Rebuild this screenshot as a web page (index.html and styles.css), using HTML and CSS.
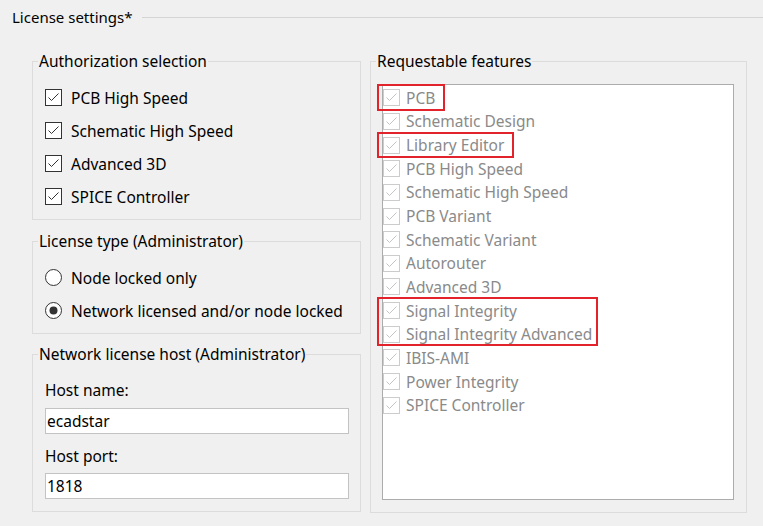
FILE: index.html
```html
<!DOCTYPE html>
<html>
<head>
<meta charset="utf-8">
<link rel="stylesheet" href="styles.css">
</head>
<body>
<div class="page">
  <div class="header">
    <span class="header-title">License settings*</span>
    <span class="header-line"></span>
  </div>
  <div class="content">
    <div class="left-col">
      <fieldset class="group g-auth">
        <legend>Authorization selection</legend>
        <div class="group-body body-auth">
          <div class="opt"><span class="cb"><svg viewBox="0 0 17 17" width="17" height="17"><rect x="0.5" y="0.5" width="16" height="16" fill="#fff" stroke="#333"/><path d="M3.5 8.5 L6.5 11.5 L13.5 4.5" fill="none" stroke="#333" stroke-width="1"/></svg></span><span class="opt-text">PCB High Speed</span></div>
          <div class="opt"><span class="cb"><svg viewBox="0 0 17 17" width="17" height="17"><rect x="0.5" y="0.5" width="16" height="16" fill="#fff" stroke="#333"/><path d="M3.5 8.5 L6.5 11.5 L13.5 4.5" fill="none" stroke="#333" stroke-width="1"/></svg></span><span class="opt-text">Schematic High Speed</span></div>
          <div class="opt"><span class="cb"><svg viewBox="0 0 17 17" width="17" height="17"><rect x="0.5" y="0.5" width="16" height="16" fill="#fff" stroke="#333"/><path d="M3.5 8.5 L6.5 11.5 L13.5 4.5" fill="none" stroke="#333" stroke-width="1"/></svg></span><span class="opt-text">Advanced 3D</span></div>
          <div class="opt"><span class="cb"><svg viewBox="0 0 17 17" width="17" height="17"><rect x="0.5" y="0.5" width="16" height="16" fill="#fff" stroke="#333"/><path d="M3.5 8.5 L6.5 11.5 L13.5 4.5" fill="none" stroke="#333" stroke-width="1"/></svg></span><span class="opt-text">SPICE Controller</span></div>
        </div>
      </fieldset>
      <fieldset class="group g-type">
        <legend>License type (Administrator)</legend>
        <div class="group-body body-type">
          <div class="opt"><span class="rb"><svg viewBox="0 0 17 17" width="17" height="17"><circle cx="8.5" cy="8.5" r="8" fill="#fff" stroke="#333"/></svg></span><span class="opt-text">Node locked only</span></div>
          <div class="opt"><span class="rb"><svg viewBox="0 0 17 17" width="17" height="17"><circle cx="8.5" cy="8.5" r="8" fill="#fff" stroke="#333"/><circle cx="8.5" cy="8.5" r="4" fill="#333"/></svg></span><span class="opt-text">Network licensed and/or node locked</span></div>
        </div>
      </fieldset>
      <fieldset class="group g-host">
        <legend>Network license host (Administrator)</legend>
        <div class="group-body body-host">
          <div class="field-label">Host name:</div>
          <div class="textbox">ecadstar</div>
          <div class="field-label second">Host port:</div>
          <div class="textbox">1818</div>
        </div>
      </fieldset>
    </div>
    <fieldset class="group g-feat">
      <legend>Requestable features</legend>
      <div class="group-body body-feat">
        <div class="listbox">
          <div class="item"><span class="dcb"><svg viewBox="0 0 17 17" width="17" height="17"><rect x="0.5" y="0.5" width="16" height="16" fill="#fff" stroke="#cccccc"/><path d="M3.5 8.5 L6.5 11.5 L13.5 4.5" fill="none" stroke="#c4c4c4" stroke-width="1"/></svg></span><span class="item-text">PCB</span></div>
          <div class="item"><span class="dcb"><svg viewBox="0 0 17 17" width="17" height="17"><rect x="0.5" y="0.5" width="16" height="16" fill="#fff" stroke="#cccccc"/><path d="M3.5 8.5 L6.5 11.5 L13.5 4.5" fill="none" stroke="#c4c4c4" stroke-width="1"/></svg></span><span class="item-text">Schematic Design</span></div>
          <div class="item"><span class="dcb"><svg viewBox="0 0 17 17" width="17" height="17"><rect x="0.5" y="0.5" width="16" height="16" fill="#fff" stroke="#cccccc"/><path d="M3.5 8.5 L6.5 11.5 L13.5 4.5" fill="none" stroke="#c4c4c4" stroke-width="1"/></svg></span><span class="item-text">Library Editor</span></div>
          <div class="item"><span class="dcb"><svg viewBox="0 0 17 17" width="17" height="17"><rect x="0.5" y="0.5" width="16" height="16" fill="#fff" stroke="#cccccc"/><path d="M3.5 8.5 L6.5 11.5 L13.5 4.5" fill="none" stroke="#c4c4c4" stroke-width="1"/></svg></span><span class="item-text">PCB High Speed</span></div>
          <div class="item"><span class="dcb"><svg viewBox="0 0 17 17" width="17" height="17"><rect x="0.5" y="0.5" width="16" height="16" fill="#fff" stroke="#cccccc"/><path d="M3.5 8.5 L6.5 11.5 L13.5 4.5" fill="none" stroke="#c4c4c4" stroke-width="1"/></svg></span><span class="item-text">Schematic High Speed</span></div>
          <div class="item"><span class="dcb"><svg viewBox="0 0 17 17" width="17" height="17"><rect x="0.5" y="0.5" width="16" height="16" fill="#fff" stroke="#cccccc"/><path d="M3.5 8.5 L6.5 11.5 L13.5 4.5" fill="none" stroke="#c4c4c4" stroke-width="1"/></svg></span><span class="item-text">PCB Variant</span></div>
          <div class="item"><span class="dcb"><svg viewBox="0 0 17 17" width="17" height="17"><rect x="0.5" y="0.5" width="16" height="16" fill="#fff" stroke="#cccccc"/><path d="M3.5 8.5 L6.5 11.5 L13.5 4.5" fill="none" stroke="#c4c4c4" stroke-width="1"/></svg></span><span class="item-text">Schematic Variant</span></div>
          <div class="item"><span class="dcb"><svg viewBox="0 0 17 17" width="17" height="17"><rect x="0.5" y="0.5" width="16" height="16" fill="#fff" stroke="#cccccc"/><path d="M3.5 8.5 L6.5 11.5 L13.5 4.5" fill="none" stroke="#c4c4c4" stroke-width="1"/></svg></span><span class="item-text">Autorouter</span></div>
          <div class="item"><span class="dcb"><svg viewBox="0 0 17 17" width="17" height="17"><rect x="0.5" y="0.5" width="16" height="16" fill="#fff" stroke="#cccccc"/><path d="M3.5 8.5 L6.5 11.5 L13.5 4.5" fill="none" stroke="#c4c4c4" stroke-width="1"/></svg></span><span class="item-text">Advanced 3D</span></div>
          <div class="item"><span class="dcb"><svg viewBox="0 0 17 17" width="17" height="17"><rect x="0.5" y="0.5" width="16" height="16" fill="#fff" stroke="#cccccc"/><path d="M3.5 8.5 L6.5 11.5 L13.5 4.5" fill="none" stroke="#c4c4c4" stroke-width="1"/></svg></span><span class="item-text">Signal Integrity</span></div>
          <div class="item"><span class="dcb"><svg viewBox="0 0 17 17" width="17" height="17"><rect x="0.5" y="0.5" width="16" height="16" fill="#fff" stroke="#cccccc"/><path d="M3.5 8.5 L6.5 11.5 L13.5 4.5" fill="none" stroke="#c4c4c4" stroke-width="1"/></svg></span><span class="item-text">Signal Integrity Advanced</span></div>
          <div class="item"><span class="dcb"><svg viewBox="0 0 17 17" width="17" height="17"><rect x="0.5" y="0.5" width="16" height="16" fill="#fff" stroke="#cccccc"/><path d="M3.5 8.5 L6.5 11.5 L13.5 4.5" fill="none" stroke="#c4c4c4" stroke-width="1"/></svg></span><span class="item-text">IBIS-AMI</span></div>
          <div class="item"><span class="dcb"><svg viewBox="0 0 17 17" width="17" height="17"><rect x="0.5" y="0.5" width="16" height="16" fill="#fff" stroke="#cccccc"/><path d="M3.5 8.5 L6.5 11.5 L13.5 4.5" fill="none" stroke="#c4c4c4" stroke-width="1"/></svg></span><span class="item-text">Power Integrity</span></div>
          <div class="item"><span class="dcb"><svg viewBox="0 0 17 17" width="17" height="17"><rect x="0.5" y="0.5" width="16" height="16" fill="#fff" stroke="#cccccc"/><path d="M3.5 8.5 L6.5 11.5 L13.5 4.5" fill="none" stroke="#c4c4c4" stroke-width="1"/></svg></span><span class="item-text">SPICE Controller</span></div>
        </div>
      </div>
      <div class="mark mark-pcb"></div>
      <div class="mark mark-lib"></div>
      <div class="mark mark-si"></div>
    </fieldset>
  </div>
</div>
</body>
</html>
```

FILE: styles.css
```css
html, body {
  margin: 0;
  padding: 0;
  background: #f0f0f0;
}
body {
  font-family: "Noto Sans", "Open Sans", sans-serif;
  font-size: 15.5px;
  color: #000;
  width: 763px;
  height: 526px;
  overflow: hidden;
}
.page {
  width: 763px;
}
.header {
  display: flex;
  align-items: center;
  padding: 7px 0 0 12px;
  height: 20px;
}
.header-title {
  font-size: 15px;
  line-height: 20px;
  white-space: nowrap;
}
.header-line {
  flex: 1;
  height: 1px;
  background: #d4d4d4;
  margin-left: 9px;
}
.content {
  display: flex;
  align-items: flex-start;
  gap: 9px;
  margin-top: 24px;
  padding-left: 32px;
}
.left-col {
  width: 329px;
  display: flex;
  flex-direction: column;
}
.group {
  margin: 0;
  padding: 0;
  border: 1px solid #dcdcdc;
  min-inline-size: 0;
  box-sizing: border-box;
}
.group legend {
  padding: 0 1px;
  margin-left: 5px;
  line-height: 20px;
  white-space: nowrap;
}
.g-auth { width: 329px; }
.g-type { width: 329px; margin-top: 11px; }
.g-host { width: 329px; margin-top: 10px; }
.g-feat { width: 377px; position: relative; }

.body-auth { padding: 10px 12px 6px 12px; }
.body-type { padding: 10px 12px 6px 12px; }
.body-host { padding: 16px 12px 12px 12px; }
.body-feat { padding: 13px 12px 12px 11px; }

.opt {
  display: flex;
  align-items: center;
  height: 33px;
}
.cb, .rb, .dcb {
  display: flex;
  width: 17px;
  height: 17px;
  flex: none;
}
.opt-text {
  margin-left: 9px;
  white-space: nowrap;
}
.field-label {
  line-height: 20px;
}
.field-label.second {
  margin-top: 12px;
}
.textbox {
  margin-top: 8px;
  height: 24px;
  line-height: 24px;
  width: 301px;
  background: #fff;
  border: 1px solid #c3c3c3;
  padding-left: 1px;
  box-sizing: content-box;
}
.field-label.second + .textbox {
  margin-top: 7px;
}
.listbox {
  height: 413px;
  border: 1px solid #acacac;
  background: #fff;
  padding-top: 1px;
  box-sizing: content-box;
  width: 350px;
}
.item {
  display: flex;
  align-items: center;
  height: 23.65px;
}
.dcb {
  margin-left: 0;
}
.item-text {
  margin-left: 6px;
  color: #8a8a8a;
  white-space: nowrap;
}
.mark {
  position: absolute;
  border: 2px solid #e3232c;
  box-sizing: border-box;
  pointer-events: none;
}
.mark-pcb { left: 6px; top: 13px; width: 68px; height: 27px; }
.mark-lib { left: 6px; top: 61px; width: 137px; height: 26px; }
.mark-si  { left: 6px; top: 226px; width: 221px; height: 49px; }
```
